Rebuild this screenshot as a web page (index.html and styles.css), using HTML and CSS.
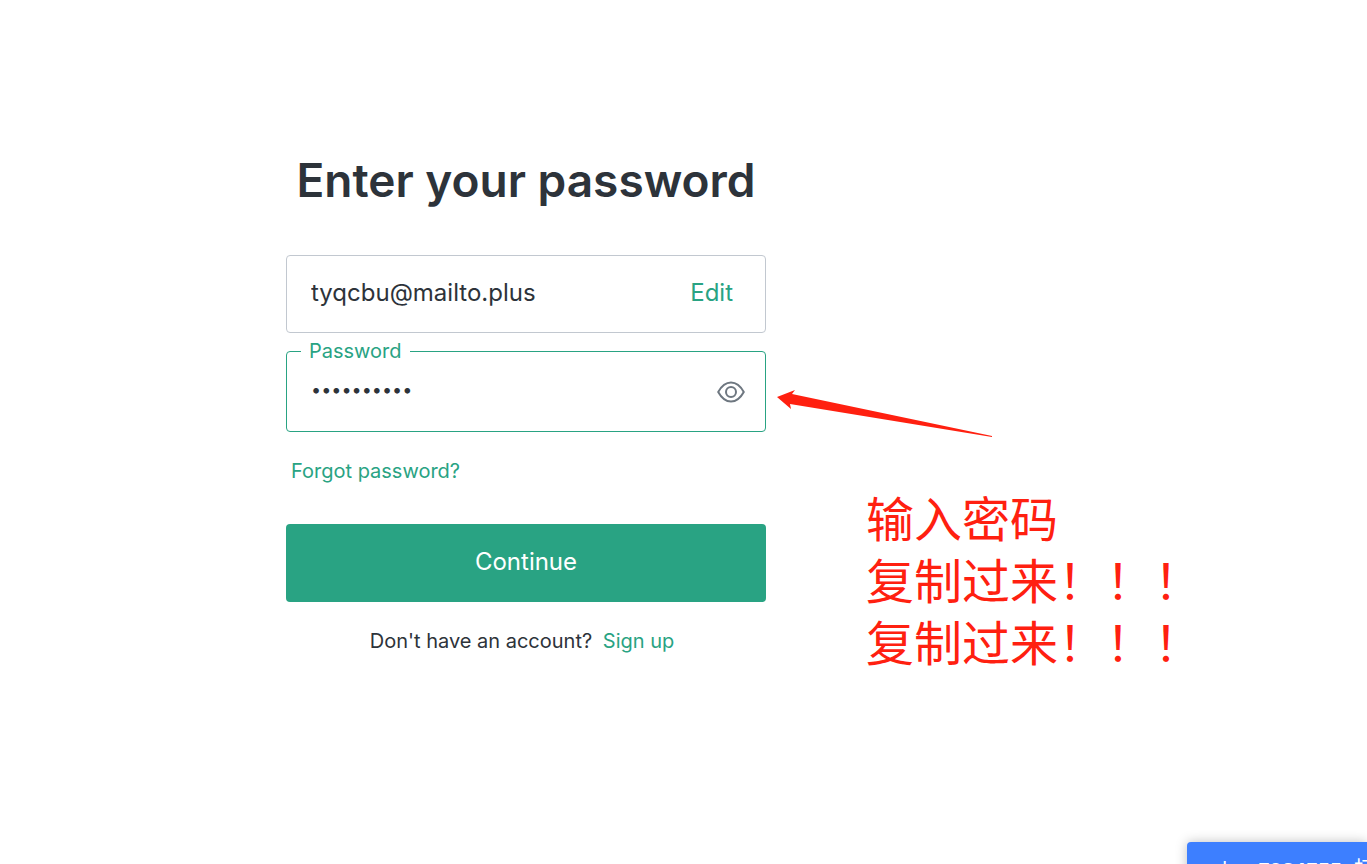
FILE: index.html
```html
<!DOCTYPE html>
<html lang="en">
<head>
    <meta charset="UTF-8">
    <meta name="viewport" content="width=device-width, initial-scale=1.0">
    <title>Enter your password</title>
    <link rel="stylesheet" href="styles.css">
</head>
<body>
    <div class="page">
        <main class="login">
            <h1 class="title">Enter your password</h1>

            <form class="form">
                <div class="field">
                    <input class="field-input" type="email" aria-label="Email address" value="tyqcbu@mailto.plus" readonly>
                    <a class="link edit" href="#">Edit</a>
                </div>

                <div class="field field-active">
                    <label class="field-label" for="password">Password</label>
                    <input class="field-input password" type="password" id="password" value="abcdefghij">
                    <button class="eye" type="button" aria-label="Show password">
                        <svg width="28" height="22" viewBox="0 0 28 22" fill="none" stroke="#6e7780" stroke-width="2">
                            <path d="M1.2 11C4.5 5 9 1.5 14 1.5S23.5 5 26.8 11C23.5 17 19 20.5 14 20.5S4.5 17 1.2 11Z" stroke-linejoin="round"/>
                            <circle cx="14" cy="11" r="5"/>
                        </svg>
                    </button>
                </div>

                <a class="link forgot" href="#">Forgot password?</a>

                <button class="continue" type="submit">Continue</button>
            </form>

            <p class="signup">Don't have an account? <a class="link" href="#">Sign up</a></p>
        </main>

        <aside class="hint">
            <svg class="arrow" width="216" height="48" viewBox="0 0 216 48" fill="#ff2010">
                <path d="M0 7L18 0L15 4L215 46V47L13 14L14 19Z"/>
            </svg>
            <p class="note" lang="zh-CN">输入密码<br>复制过来！！！<br>复制过来！！！</p>
        </aside>
    </div>

    <div class="toast" lang="zh-CN">by <b>7984755</b> 打</div>
</body>
</html>
```

FILE: styles.css
```css
* {
    box-sizing: border-box;
}

body {
    position: relative;
    min-height: 100vh;
    margin: 0;
    overflow: hidden;
    background: #fff;
    color: #2d333a;
    font-family: Inter, 'Noto Sans CJK SC', sans-serif;
    font-size: 20px;
}

.page {
    display: grid;
    grid-template-columns: 480px 1fr;
    padding: 151px 0 0 286px;
}

.title {
    margin: 0 0 46px;
    font-size: 46px;
    font-weight: 600;
    line-height: 58px;
    text-align: center;
    white-space: nowrap;
}

.form {
    display: flex;
    flex-direction: column;
}

.field {
    position: relative;
    display: flex;
    align-items: center;
    height: 78px;
    margin-bottom: 18px;
    padding: 0 20px 4px 24px;
    border: 1px solid #c2c8d0;
    border-radius: 4px;
    font-size: 24px;
}

.field-active {
    height: 81px;
    margin-bottom: 24px;
    padding-bottom: 0;
    border-color: #29a383;
}

.field-input {
    flex: 1;
    min-width: 0;
    padding: 0;
    border: 0;
    outline: 0;
    background: none;
    color: inherit;
    font: inherit;
}

.password {
    padding-bottom: 4px;
    font-size: 18px;
}

/* sits on the top border of the field */
.field-label {
    position: absolute;
    top: -15px;
    left: 14px;
    padding: 0 8px;
    background: #fff;
    color: #29a383;
    font-size: 20px;
    line-height: 28px;
}

.link {
    color: #29a383;
    text-decoration: none;
}

.edit {
    padding-right: 12px;
}

.eye {
    display: flex;
    padding: 0;
    border: 0;
    background: none;
    cursor: pointer;
}

.forgot {
    align-self: flex-start;
    margin: 0 0 38px 5px;
    line-height: 30px;
}

.continue {
    height: 78px;
    padding: 0 0 4px;
    border: 0;
    border-radius: 4px;
    background: #29a383;
    color: #fff;
    font: inherit;
    font-size: 24px;
    cursor: pointer;
}

.signup {
    margin: 24px 0 0;
    padding-right: 8px;
    line-height: 30px;
    text-align: center;
}

.signup .link {
    margin-left: 5px;
}

.hint {
    padding: 239px 0 0 11px;
    color: #ff2010;
}

.arrow {
    display: block;
}

.note {
    margin: 47px 0 0 89px;
    font-family: 'Noto Sans CJK SC', sans-serif;
    font-size: 48px;
    font-weight: 400;
    line-height: 62px;
}

.toast {
    position: absolute;
    top: 842px;
    right: 0;
    width: 180px;
    padding: 17px 0 14px 35px;
    border-radius: 4px 0 0 0;
    background: #3d7fff;
    box-shadow: 0 0 12px rgba(0, 0, 0, 0.25);
    color: #fff;
    font-family: 'Liberation Mono', 'Noto Sans CJK SC', monospace;
    line-height: 24px;
    white-space: nowrap;
}
```
